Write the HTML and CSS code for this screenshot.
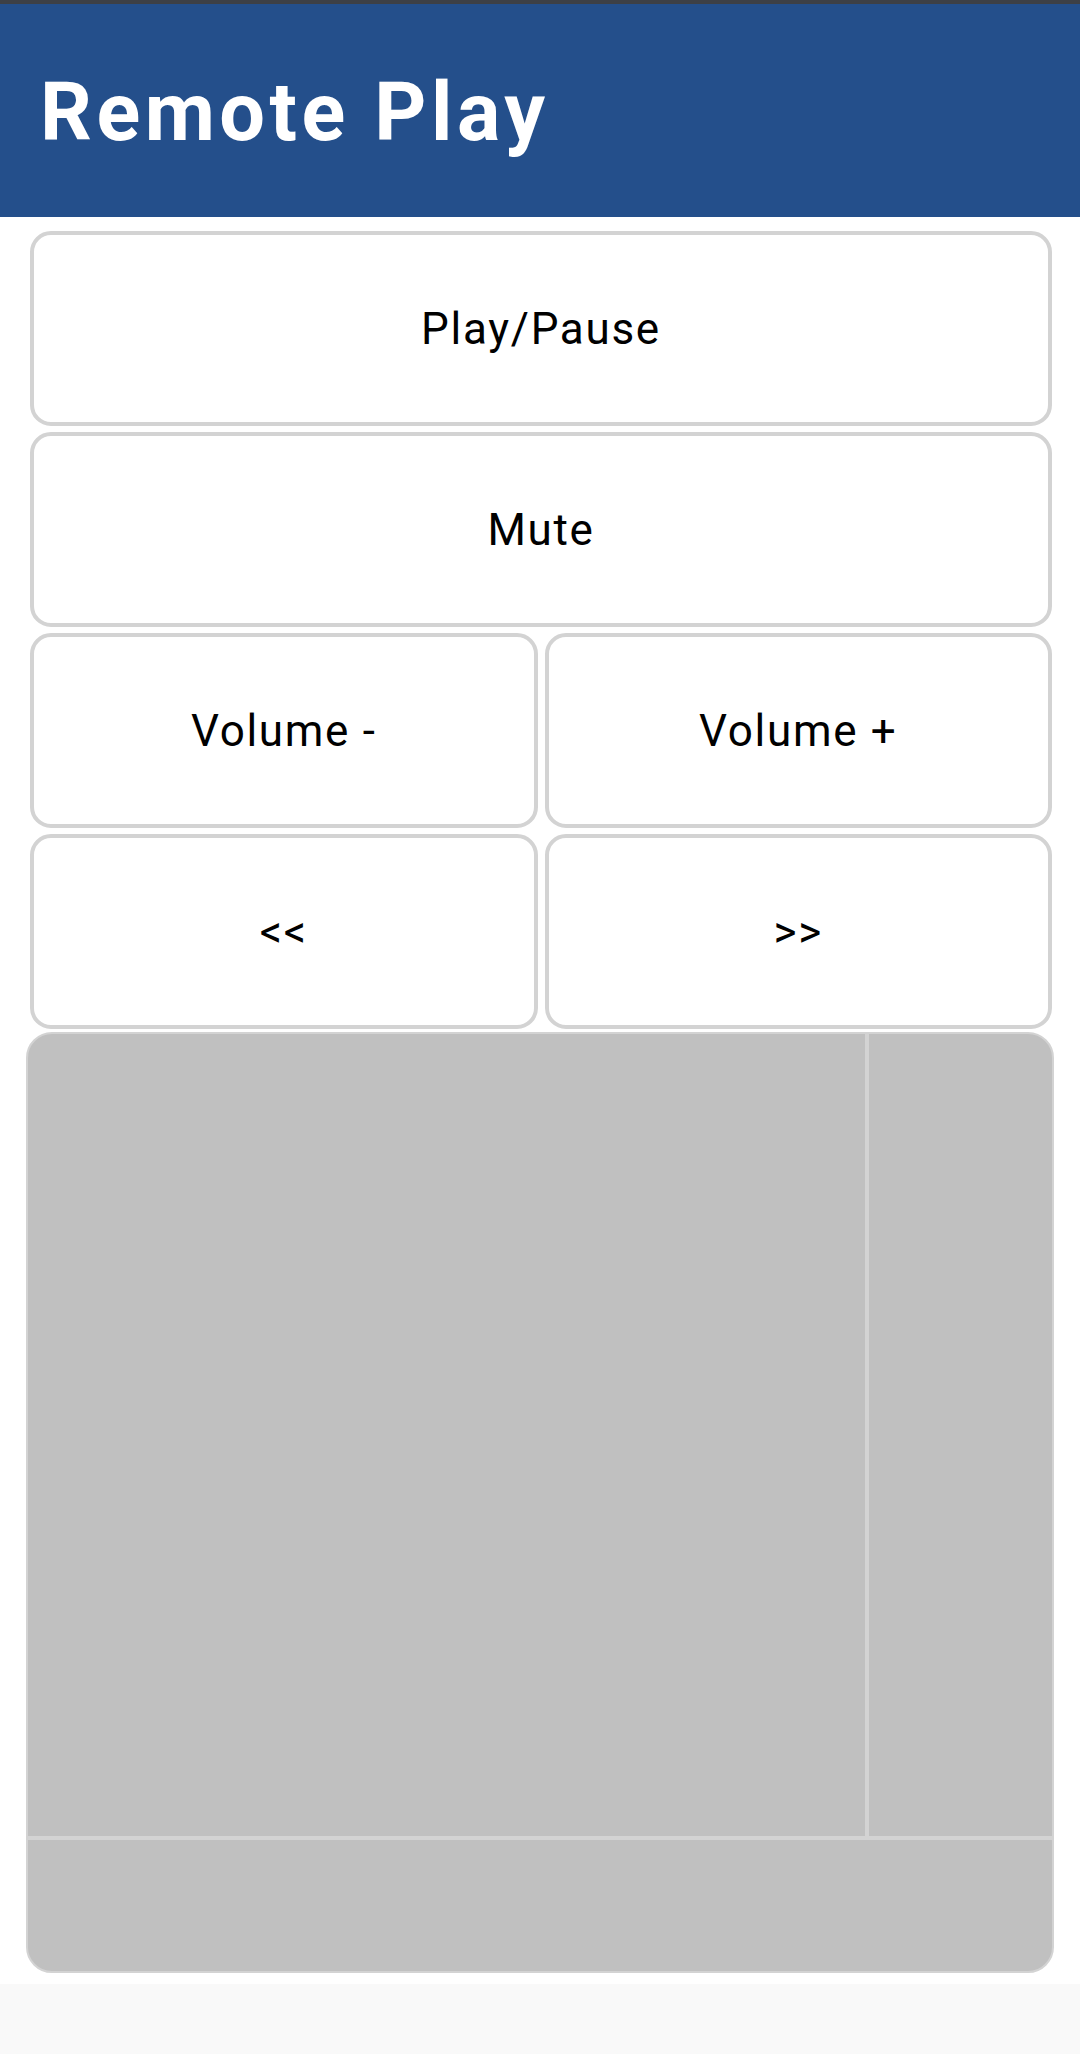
FILE: index.html
```html
<!DOCTYPE html>
<html>
<head>
<meta charset="utf-8">
<link rel="stylesheet" href="styles.css">
</head>
<body>
<div class="statusbar"></div>
<header class="appbar"><h1 class="title">Remote Play</h1></header>
<main class="content">
  <div class="buttons">
    <button class="btn wide">Play/Pause</button>
    <button class="btn wide">Mute</button>
    <button class="btn">Volume -</button>
    <button class="btn">Volume +</button>
    <button class="btn">&lt;&lt;</button>
    <button class="btn">&gt;&gt;</button>
  </div>
  <div class="pad">
    <div class="pad-main"></div>
    <div class="pad-side"></div>
    <div class="pad-bottom"></div>
  </div>
</main>
<footer class="navarea"></footer>
</body>
</html>
```

FILE: styles.css
```css
html, body {
  margin: 0;
  padding: 0;
}
body {
  width: 1080px;
  height: 2054px;
  display: flex;
  flex-direction: column;
  background: #ffffff;
  font-family: Roboto, "Liberation Sans", sans-serif;
}
.statusbar {
  height: 4px;
  background: #3d4046;
}
.appbar {
  height: 213px;
  background: #244f8b;
  display: flex;
  align-items: center;
  padding-left: 40px;
  box-sizing: border-box;
}
.title {
  margin: 0;
  color: #ffffff;
  font-weight: 700;
  font-size: 81px;
  letter-spacing: 4.5px;
  line-height: 1;
  position: relative;
  top: 2px;
}
.content {
  display: flex;
  flex-direction: column;
  padding-top: 14px;
  height: 1767px;
  box-sizing: border-box;
}
.buttons {
  display: grid;
  grid-template-columns: 1fr 1fr;
  grid-auto-rows: 195px;
  column-gap: 7px;
  row-gap: 6px;
  margin: 0 28px 0 30px;
}
.btn {
  border: 4px solid #d3d3d3;
  border-radius: 21px;
  background: #ffffff;
  font-family: Roboto, "Liberation Sans", sans-serif;
  font-size: 44px;
  letter-spacing: 1.7px;
  color: #000000;
  padding: 0;
  margin: 0;
}
.btn.wide {
  grid-column: 1 / 3;
}
.pad {
  margin: 3px 26px 0 26px;
  height: 941px;
  box-sizing: border-box;
  border: 2px solid #d3d3d3;
  border-radius: 26px;
  overflow: hidden;
  background: #c0c0c0;
  display: grid;
  grid-template-columns: 1fr 183px;
  grid-template-rows: 1fr 135px;
}
.pad-main {
  border-right: 4px solid #d3d3d3;
}
.pad-bottom {
  grid-column: 1 / 3;
  border-top: 4px solid #d3d3d3;
}
.navarea {
  flex: 1;
  background: #f9f9f9;
}
```
